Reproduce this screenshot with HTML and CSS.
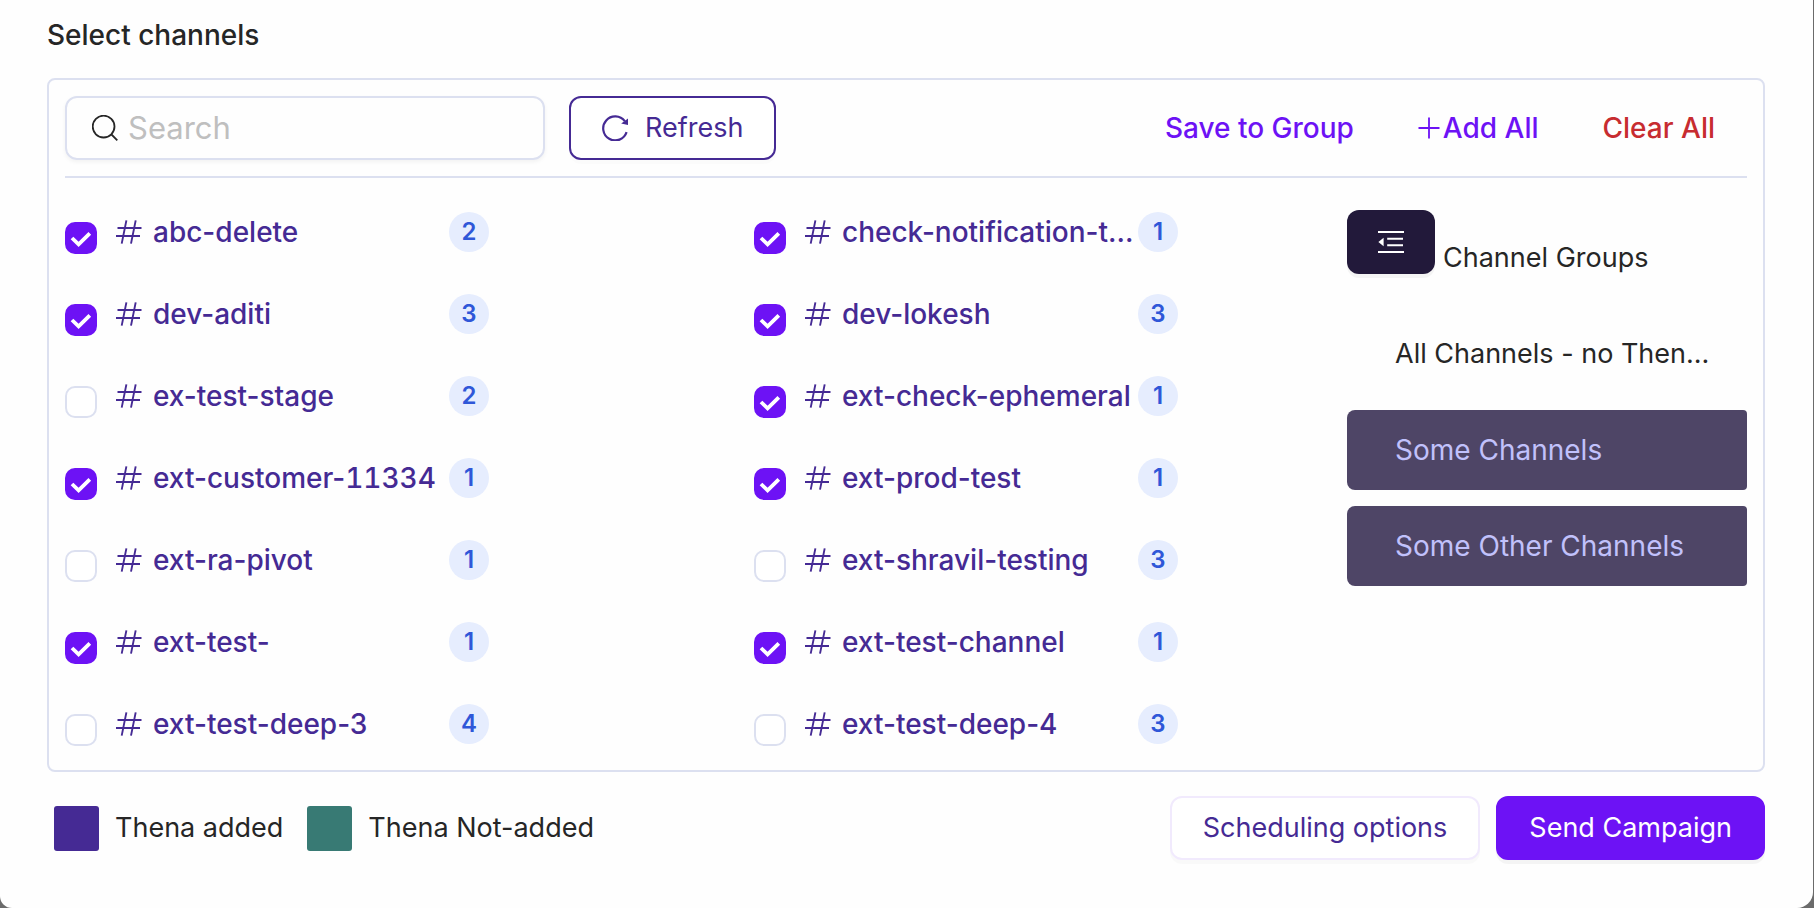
FILE: index.html
```html
<!DOCTYPE html>
<html lang="en">
<head>
<meta charset="utf-8">
<title>Select channels</title>
<link rel="stylesheet" href="styles.css">
</head>
<body>
<svg class="sprite" aria-hidden="true">
  <symbol id="hash" viewBox="0 0 26 24">
    <path d="M1.5 8H25.5M0 16H24M10.4 .4L5.7 23.6M19.7 .4L15 23.6" fill="none" stroke="currentColor" stroke-width="1.9"/>
  </symbol>
</svg>
<main class="dialog">
  <h1 class="title">Select channels</h1>

  <section class="panel">
    <div class="toolbar">
      <label class="search">
        <svg class="icon" width="26" height="26" viewBox="0 0 26 26" aria-hidden="true"><path d="M19 19L25.3 25.3M22.5 11.6A10.9 10.9 0 1 1 .7 11.6A10.9 10.9 0 1 1 22.5 11.6Z" fill="none" stroke="currentColor" stroke-width="1.8"/></svg>
        <input class="search-input" type="text" placeholder="Search" aria-label="Search channels">
      </label>
      <button class="btn btn-refresh" type="button">
        <svg class="icon" width="26" height="26" viewBox="0 0 26 26" aria-hidden="true"><path d="M22.8 6.2A12 12 0 1 0 24.6 17.2" fill="none" stroke="currentColor" stroke-width="2.2"/><path d="M26 3.4V10L19.2 8.4Z" fill="currentColor"/></svg>
        Refresh
      </button>
      <div class="actions">
        <button class="link-btn" type="button">Save to Group</button>
        <button class="link-btn" type="button"><svg class="icon" width="22" height="22" viewBox="0 0 22 22" aria-hidden="true"><path d="M11 .5V21.5M.5 11H21.5" stroke="currentColor" stroke-width="1.8"/></svg>Add All</button>
        <button class="link-btn danger" type="button">Clear All</button>
      </div>
    </div>

    <div class="content">
      <div class="channels">
        <label class="channel"><input class="check" type="checkbox" checked><svg class="hash"><use href="#hash"/></svg><span class="name">abc-delete</span><span class="badge">2</span></label>
        <label class="channel"><input class="check" type="checkbox" checked><svg class="hash"><use href="#hash"/></svg><span class="name">check-notification-t...</span><span class="badge">1</span></label>
        <label class="channel"><input class="check" type="checkbox" checked><svg class="hash"><use href="#hash"/></svg><span class="name">dev-aditi</span><span class="badge">3</span></label>
        <label class="channel"><input class="check" type="checkbox" checked><svg class="hash"><use href="#hash"/></svg><span class="name">dev-lokesh</span><span class="badge">3</span></label>
        <label class="channel"><input class="check" type="checkbox"><svg class="hash"><use href="#hash"/></svg><span class="name">ex-test-stage</span><span class="badge">2</span></label>
        <label class="channel"><input class="check" type="checkbox" checked><svg class="hash"><use href="#hash"/></svg><span class="name">ext-check-ephemeral</span><span class="badge">1</span></label>
        <label class="channel"><input class="check" type="checkbox" checked><svg class="hash"><use href="#hash"/></svg><span class="name">ext-customer-<span class="digits">11334</span></span><span class="badge">1</span></label>
        <label class="channel"><input class="check" type="checkbox" checked><svg class="hash"><use href="#hash"/></svg><span class="name">ext-prod-test</span><span class="badge">1</span></label>
        <label class="channel"><input class="check" type="checkbox"><svg class="hash"><use href="#hash"/></svg><span class="name">ext-ra-pivot</span><span class="badge">1</span></label>
        <label class="channel"><input class="check" type="checkbox"><svg class="hash"><use href="#hash"/></svg><span class="name">ext-shravil-testing</span><span class="badge">3</span></label>
        <label class="channel"><input class="check" type="checkbox" checked><svg class="hash"><use href="#hash"/></svg><span class="name">ext-test-</span><span class="badge">1</span></label>
        <label class="channel"><input class="check" type="checkbox" checked><svg class="hash"><use href="#hash"/></svg><span class="name">ext-test-channel</span><span class="badge">1</span></label>
        <label class="channel"><input class="check" type="checkbox"><svg class="hash"><use href="#hash"/></svg><span class="name">ext-test-deep-3</span><span class="badge">4</span></label>
        <label class="channel"><input class="check" type="checkbox"><svg class="hash"><use href="#hash"/></svg><span class="name">ext-test-deep-4</span><span class="badge">3</span></label>
      </div>

      <aside class="groups">
        <div class="groups-head">
          <button class="fold" type="button" aria-label="Collapse channel groups">
            <svg class="icon" width="26" height="22" viewBox="0 0 26 22" aria-hidden="true"><path d="M0 1H26M9.2 7.8H25M9.2 14.2H25M0 21H26" stroke="currentColor" stroke-width="2"/><path d="M.4 11L5.6 6.8V15.2Z" fill="currentColor"/></svg>
          </button>
          <span class="groups-title">Channel Groups</span>
        </div>
        <div class="group-list">
          <button class="group" type="button">All Channels - no Then...</button>
          <button class="group selected" type="button">Some Channels</button>
          <button class="group selected" type="button">Some Other Channels</button>
        </div>
      </aside>
    </div>
  </section>

  <footer class="footer">
    <div class="legend">
      <span class="legend-item"><i class="swatch added"></i>Thena added</span>
      <span class="legend-item"><i class="swatch not-added"></i>Thena Not-added</span>
    </div>
    <button class="btn btn-schedule" type="button">Scheduling options</button>
    <button class="btn btn-send" type="button">Send Campaign</button>
  </footer>
</main>
</body>
</html>
```
FILE: styles.css
```css
* { box-sizing: border-box; }

body {
  margin: 0;
  min-height: 100vh;
  padding-right: 1px;
  background: #6b6b6b;
  color: #262626;
  font: 400 27px/34px Inter, "Liberation Sans", sans-serif;
}

button, input {
  font: inherit;
  color: inherit;
}

button {
  cursor: pointer;
}

.sprite {
  display: none;
}

.icon {
  flex: none;
}

.dialog {
  min-height: 100vh;
  padding: 18px 48px 48px 47px;
  background: #fefefe;
  border-radius: 0 0 16px 12px;
}

.title {
  margin: 0 0 26px;
  font-size: 28px;
  font-weight: 500;
  line-height: 34px;
}

.panel {
  padding: 16px;
  border: 2px solid #dce0f0;
  border-radius: 8px;
}

.toolbar {
  display: flex;
  align-items: center;
  gap: 24px;
  padding-bottom: 16px;
  border-bottom: 2px solid #dce0f0;
}

.search {
  display: flex;
  align-items: center;
  gap: 10px;
  width: 480px;
  height: 64px;
  padding: 0 25px;
  border: 2px solid #dce0f0;
  border-radius: 12px;
  box-shadow: 0 2px 4px rgba(0, 0, 0, .05);
}

.search-input {
  flex: 1;
  min-width: 0;
  padding: 0;
  border: 0;
  outline: 0;
  background: none;
  font-size: 31px;
}

.search-input::placeholder {
  color: #bfbfbf;
}

.btn {
  display: flex;
  align-items: center;
  justify-content: center;
  height: 64px;
  padding: 0 31px;
  border: 2px solid;
  border-radius: 12px;
  background: #fff;
  color: #452a94;
  white-space: nowrap;
}

.btn-refresh {
  gap: 17px;
  border-color: #452a94;
  box-shadow: 0 4px 0 rgba(0, 0, 0, .01);
}

.actions {
  display: flex;
  margin-left: auto;
}

.link-btn {
  display: flex;
  align-items: center;
  gap: 3px;
  height: 64px;
  padding: 0 32px;
  border: 0;
  background: none;
  color: #6d12f5;
  font-size: 28px;
  font-weight: 500;
}

.danger {
  color: #c72c30;
}

.content {
  display: flex;
  padding: 32px 0 8px;
}

.channels {
  flex: 1;
  display: grid;
  grid-template-columns: 1fr 1fr;
  gap: 38px 96px;
  align-content: start;
}

.channel {
  display: flex;
  align-items: center;
  height: 44px;
  color: #452a94;
  font-size: 28px;
  font-weight: 500;
}

.check {
  appearance: none;
  flex: none;
  align-self: flex-end;
  width: 32px;
  height: 32px;
  margin: 0 19px 0 0;
  border: 2px solid #dce0f0;
  border-radius: 10px;
  background: #fff;
}

.check:checked {
  border-color: #6d12f5;
  background: #6d12f5 url("data:image/svg+xml,%3Csvg xmlns='http://www.w3.org/2000/svg' viewBox='0 0 28 28'%3E%3Cpath d='M5 14L11.6 20.4L22.8 9.4' fill='none' stroke='white' stroke-width='3.8'/%3E%3C/svg%3E") center / 28px no-repeat;
}

.hash {
  flex: none;
  width: 26px;
  height: 24px;
  margin-right: 11px;
}

.name {
  width: 296px;
  overflow: hidden;
  text-overflow: ellipsis;
  white-space: nowrap;
}

.digits {
  font-variant-numeric: tabular-nums;
}

.badge {
  flex: none;
  width: 40px;
  border-radius: 50%;
  background: #e6edfe;
  color: #2f57d8;
  font-size: 24px;
  font-weight: 600;
  line-height: 40px;
  text-align: center;
}

.groups {
  width: 400px;
}

.groups-head {
  display: flex;
  align-items: flex-end;
  gap: 8px;
  margin-bottom: 40px;
}

.fold {
  display: grid;
  place-items: center;
  width: 88px;
  height: 64px;
  padding: 0;
  border: 0;
  border-radius: 12px;
  background: #22193a;
  color: #fff;
  box-shadow: 0 4px 0 rgba(0, 0, 0, .04);
}

.groups-title {
  line-height: 32px;
}

.group-list {
  display: grid;
  gap: 16px;
}

.group {
  height: 80px;
  padding: 0 24px 0 48px;
  border: 0;
  border-radius: 8px 4px 4px 8px;
  background: none;
  overflow: hidden;
  text-align: left;
  text-overflow: ellipsis;
  white-space: nowrap;
}

.selected {
  background: #4e4566;
  color: #c1c1fb;
  font-size: 28px;
}

.footer {
  display: flex;
  align-items: center;
  gap: 16px;
  margin-top: 24px;
}

.legend {
  display: flex;
  gap: 24px;
  margin-right: auto;
  padding-left: 7px;
}

.legend-item {
  display: flex;
  align-items: center;
  gap: 16px;
}

.swatch {
  width: 45px;
  height: 45px;
  border-radius: 3px;
}

.added {
  background: #452a94;
}

.not-added {
  background: #387a74;
}

.btn-schedule {
  border-color: #f1eafd;
  box-shadow: 0 4px 0 rgba(0, 0, 0, .02);
}

.btn-send {
  border-color: #6d12f5;
  background: #6d12f5;
  color: #fff;
  box-shadow: 0 4px 0 rgba(0, 0, 0, .04);
}
```
